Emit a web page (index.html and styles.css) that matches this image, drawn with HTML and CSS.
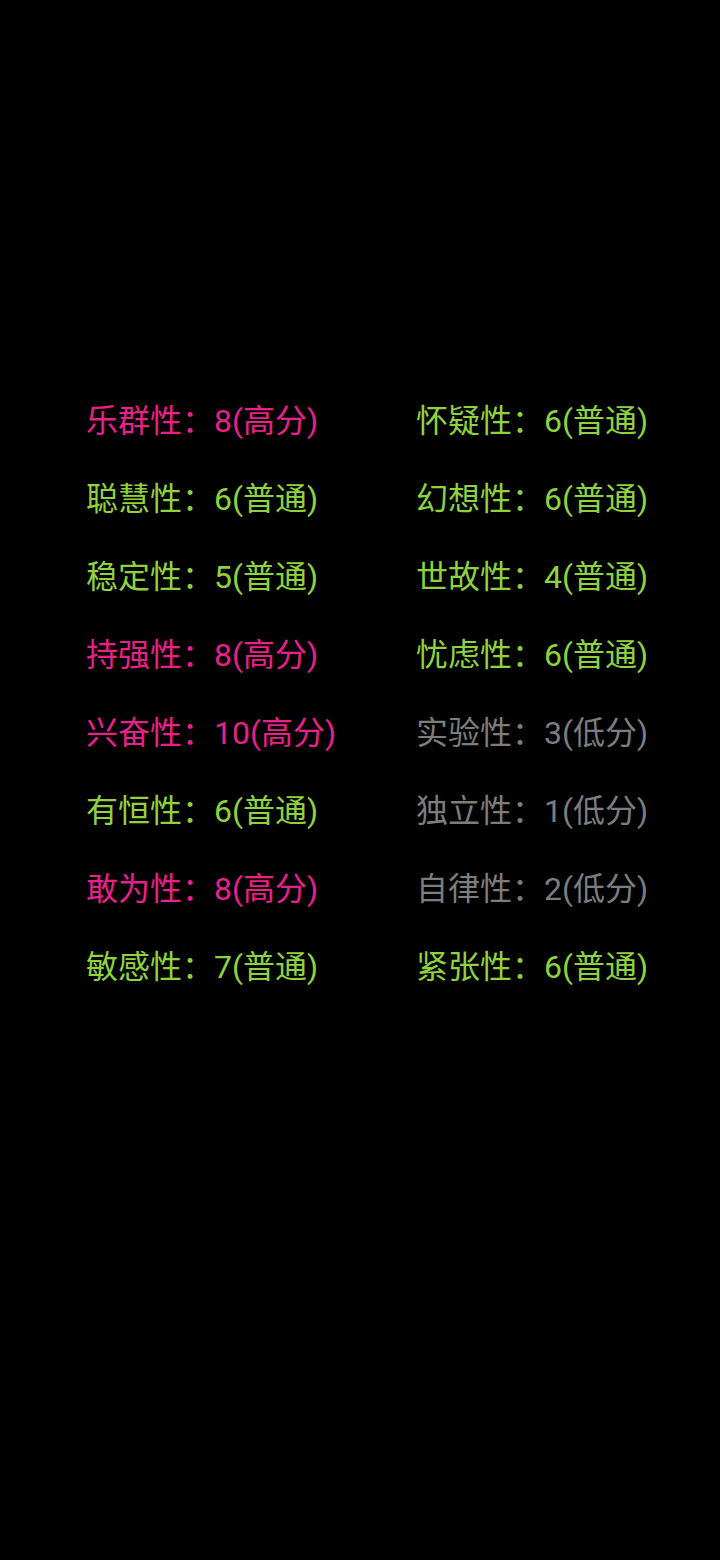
FILE: index.html
```html
<!DOCTYPE html>
<html lang="zh">
<head>
<meta charset="utf-8">
<link rel="stylesheet" href="styles.css">
</head>
<body>
<div class="grid">
  <div class="item high">乐群性<span class="colon">：</span>8(高分)</div>
  <div class="item normal">怀疑性<span class="colon">：</span>6(普通)</div>
  <div class="item normal">聪慧性<span class="colon">：</span>6(普通)</div>
  <div class="item normal">幻想性<span class="colon">：</span>6(普通)</div>
  <div class="item normal">稳定性<span class="colon">：</span>5(普通)</div>
  <div class="item normal">世故性<span class="colon">：</span>4(普通)</div>
  <div class="item high">持强性<span class="colon">：</span>8(高分)</div>
  <div class="item normal">忧虑性<span class="colon">：</span>6(普通)</div>
  <div class="item high">兴奋性<span class="colon">：</span>10(高分)</div>
  <div class="item low">实验性<span class="colon">：</span>3(低分)</div>
  <div class="item normal">有恒性<span class="colon">：</span>6(普通)</div>
  <div class="item low">独立性<span class="colon">：</span>1(低分)</div>
  <div class="item high">敢为性<span class="colon">：</span>8(高分)</div>
  <div class="item low">自律性<span class="colon">：</span>2(低分)</div>
  <div class="item normal">敏感性<span class="colon">：</span>7(普通)</div>
  <div class="item normal">紧张性<span class="colon">：</span>6(普通)</div>
</div>
</body>
</html>
```
FILE: styles.css
```css
html, body {
  margin: 0;
  padding: 0;
  background: #000;
  width: 720px;
  height: 1560px;
  overflow: hidden;
}
body {
  font-family: Roboto, "Noto Sans CJK SC", sans-serif;
}
.grid {
  display: grid;
  grid-template-columns: 330px 330px;
  padding: 379px 0 0 86px;
}
.item {
  font-size: 32px;
  line-height: 78px;
  height: 78px;
  white-space: nowrap;
  text-spacing-trim: space-all;
}
.colon {
  display: inline-block;
  width: 1em;
  text-align: left;
  font-family: "Noto Sans CJK SC", sans-serif;
}
.high { color: #e8208a; }
.normal { color: #8fd33c; }
.low { color: #7d7d7d; }
```
